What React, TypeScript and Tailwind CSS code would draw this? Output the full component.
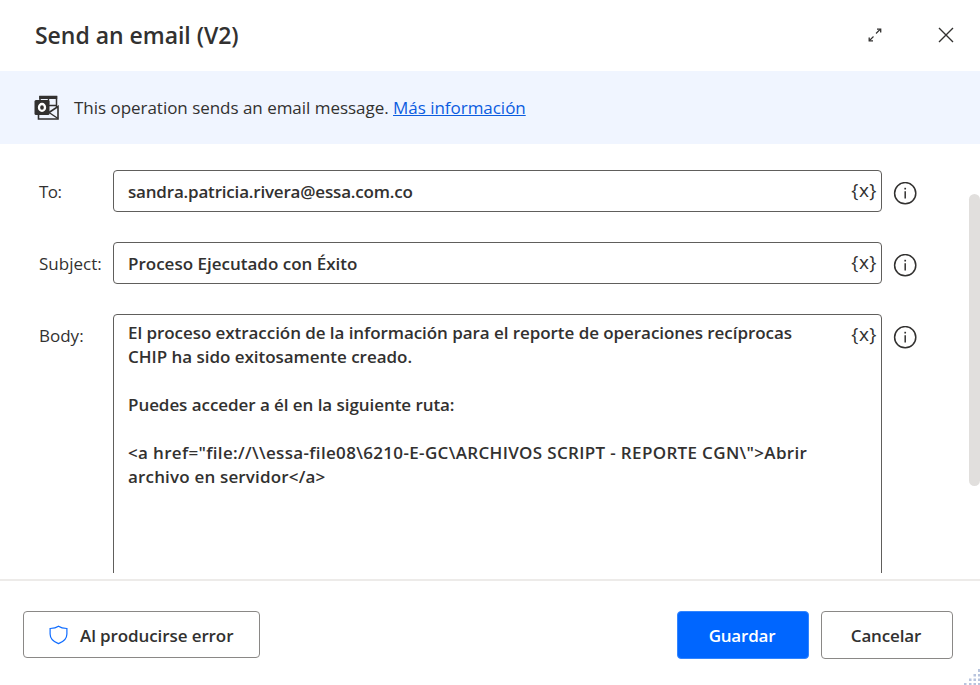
import type { ReactNode } from 'react';

function InfoIcon() {
  return (
    <svg className="mt-[12px] ml-[11px] h-6 w-6 shrink-0" viewBox="0 0 24 24" fill="none" stroke="#323130">
      <circle cx="12.2" cy="11.2" r="10.6" strokeWidth="1.5" />
      <path d="M12.2 9.2V16.4" strokeWidth="1.5" />
      <path d="M12.2 5.8V7.5" strokeWidth="1.7" />
    </svg>
  );
}

function VariableButton() {
  return <span className="mt-[6px] mr-[4px] text-[19px] leading-[26px] tracking-[0.5px] text-[#323130]">{'{x}'}</span>;
}

function Field({ label, tall, children }: { label: ReactNode; tall?: boolean; children: ReactNode }) {
  return (
    <div className="flex items-start">
      <div className="w-[74px] shrink-0 pt-[10px] text-[17px] leading-6">{label}</div>
      <div
        className={`flex w-[769px] shrink-0 items-start rounded-[4px] border border-[#605e5c] pl-[14px] text-[17px] leading-6 font-semibold ${
          tall ? 'h-[300px]' : 'h-[42px]'
        }`}
      >
        <div className={tall ? 'pt-[6px]' : 'pt-[9px]'}>{children}</div>
        <div className="ml-auto flex font-normal">
          <VariableButton />
        </div>
      </div>
      <InfoIcon />
    </div>
  );
}

export default function App() {
  return (
    <div className="relative flex h-[685px] w-[980px] flex-col overflow-hidden bg-white font-['Open_Sans',sans-serif] whitespace-pre text-[#323130]">
      <header className="flex h-[71px] shrink-0 items-center pr-[26px] pl-[35px]">
        <h1 className="mt-[-2px] text-[23px] leading-8 font-semibold tracking-[-0.03px]">Send an email (V2)</h1>
        <svg className="mt-[-2px] ml-auto h-4 w-4" viewBox="0 0 16 16" fill="none" stroke="#323130" strokeWidth="1.1">
          <path d="M9 6.5L13 2.5M6.5 9.5L2.5 13.5" />
          <path d="M10 2.2H13.7V5.5M2.2 10.5V13.8H6" strokeWidth="1.3" />
        </svg>
        <svg className="mt-[-2px] ml-[55px] h-4 w-4" viewBox="0 0 16 16" fill="none" stroke="#323130" strokeWidth="1.4">
          <path d="M1 1L15 15M15 1L1 15" />
        </svg>
      </header>

      <div className="flex h-[73px] shrink-0 items-center bg-[#f0f5ff] pl-[34px]">
        <svg className="h-[26px] w-[26px]" viewBox="0 0 26 26" fill="none" stroke="#323130">
          <path d="M6 6V1.5H22.5V12" strokeWidth="1.5" />
          <path d="M5.3 2.5H23.2" strokeWidth="3" />
          <path d="M4.5 19V24H24V11.5L15 17.5" strokeWidth="1.6" />
          <path d="M15 10.5H22M14.5 4V9M15 17.5L24 23.5" strokeWidth="1.4" />
          <rect x="0.5" y="5" width="15" height="15" rx="1.5" fill="#323130" stroke="none" />
          <ellipse cx="8" cy="12.4" rx="3" ry="3.4" stroke="#fff" strokeWidth="2.3" />
        </svg>
        <p className="ml-[14px] text-[17px] leading-6 tracking-[-0.03px]">
          <span>This operation sends an email message. </span>
          <a className="text-[#0b5cdf] underline">Más información</a>
        </p>
      </div>

      <main className="flex h-[429px] shrink-0 justify-between overflow-hidden">
        <div className="flex flex-col gap-[30px] pt-[26px] pl-[39px]">
          <Field label={<span className="tracking-[-0.6px]">To:</span>}>
            <span className="tracking-[-0.19px]">sandra.patricia.rivera@essa.com.co</span>
          </Field>
          <Field label="Subject:">Proceso Ejecutado con Éxito</Field>
          <Field label="Body:" tall>
            <div className="tracking-[-0.06px]">El proceso extracción de la información para el reporte de operaciones recíprocas</div>
            <div className="tracking-[-0.03px]">CHIP ha sido exitosamente creado.</div>
            <div className="mt-6 tracking-[-0.06px]">Puedes acceder a él en la siguiente ruta:</div>
            <div className="mt-6 tracking-[0.34px]">{'<a href="file://\\\\essa-file08\\6210-E-GC\\ARCHIVOS SCRIPT - REPORTE CGN\\">Abrir'}</div>
            <div className="tracking-[0.17px]">{'archivo en servidor</a>'}</div>
          </Field>
        </div>
        <div className="mt-[50px] h-[292px] w-[11px] shrink-0 rounded-full bg-[#e1dfdd]" />
      </main>

      <footer className="mt-[6px] flex grow items-start border-t-2 border-[#edebe9] pt-[30px] pr-[27px] pl-[23px] text-[17px] font-semibold">
        <button className="flex h-[47px] w-[237px] items-center rounded-[4px] border border-[#8a8886] pl-[25px]">
          <svg className="h-5 w-[19px]" viewBox="0 0 19 20" fill="none" stroke="#0f6cff" strokeWidth="1.2">
            <path d="M9.5 1.3C7.5 2.8 4.5 3.5 1.1 3.5V9C1.1 13.5 4.5 16.8 9.5 18.6C14.5 16.8 17.9 13.5 17.9 9V3.5C14.5 3.5 11.5 2.8 9.5 1.3Z" />
          </svg>
          <span className="mt-[2px] ml-[12px] tracking-[-0.1px]">Al producirse error</span>
        </button>
        <button className="ml-auto h-[48px] w-[132px] rounded-[4px] border border-[#3385ff] bg-[#0066ff] pt-[2px] pr-[2px] tracking-[-0.2px] text-white">Guardar</button>
        <button className="ml-[12px] h-[48px] w-[132px] rounded-[4px] border border-[#8a8886] pt-[2px] pr-[2px] tracking-[-0.15px]">Cancelar</button>
      </footer>

      <svg className="absolute right-0 bottom-0 h-4 w-4" viewBox="0 0 16 16" fill="#b8c4de">
        <path d="M14 0h2v3h-2zM9.5 5h2.5v2.5h-2.5zM14 5h2v2.5h-2zM5 9.5h2.5v2.5h-2.5zM9.5 9.5h2.5v2.5h-2.5zM14 9.5h2v2.5h-2zM0 14h2.5v2h-2.5zM5 14h2.5v2h-2.5zM9.5 14h2.5v2h-2.5zM14 14h2v2h-2z" />
      </svg>
    </div>
  );
}
